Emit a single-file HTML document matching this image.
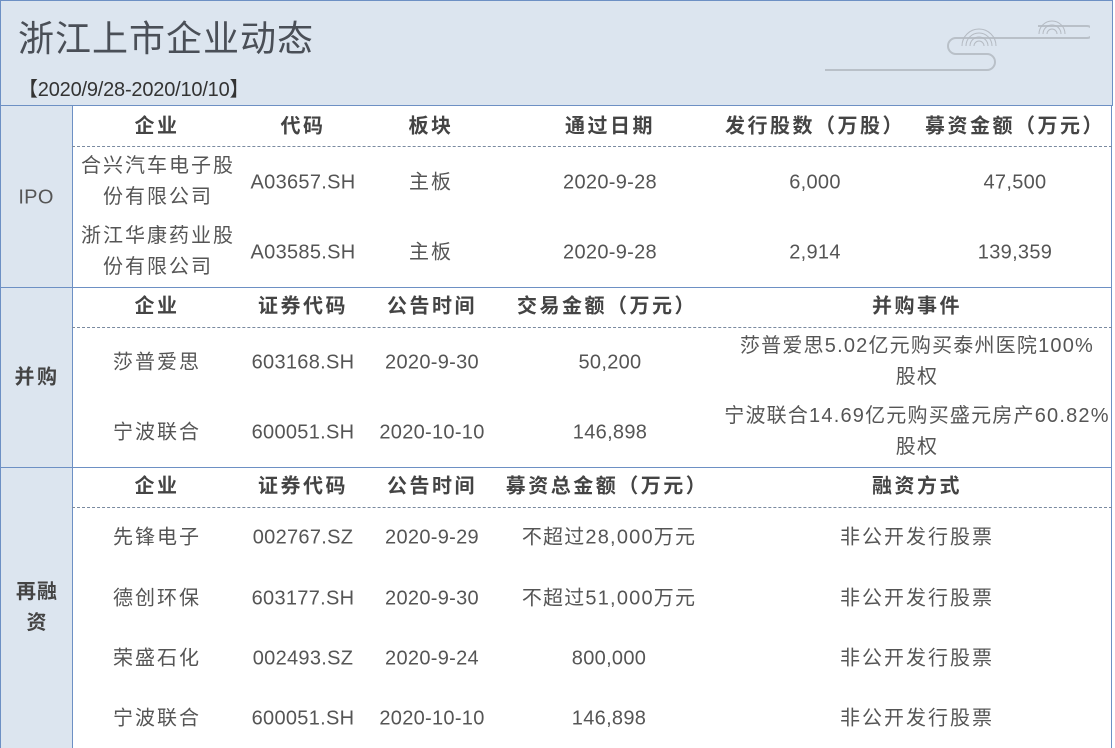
<!DOCTYPE html>
<html><head><meta charset="utf-8"><style>
body{margin:0;width:1115px;height:748px;background:#fff;position:relative;overflow:hidden;font-family:"Liberation Sans","Noto Sans CJK SC",sans-serif;color:#555}
.a{position:absolute}
.t{position:absolute;transform:translate(-50%,-50%);white-space:nowrap;font-size:20px;text-align:center;line-height:31px;letter-spacing:0.3px}
.cj{letter-spacing:2px}
.mx{letter-spacing:1.2px}
.h{font-weight:bold;color:#444;letter-spacing:2.5px}
.d{position:absolute;left:72px;width:1040px;border-top:1px dashed #7a8aa0;height:0}
</style></head><body>
<div class="a" style="left:0;top:0;width:1111px;height:105px;background:#dce5ef;border:1px solid #6d90c4;border-bottom:none"></div>
<div class="a" style="left:18px;top:10px;font-size:36px;color:#4a4f57;letter-spacing:1px">浙江上市企业动态</div>
<div class="a" style="left:18px;top:73px;font-size:20px;color:#333;letter-spacing:-0.2px">【2020/9/28-2020/10/10】</div>
<svg class="a" style="left:820px;top:15px" width="270" height="60" viewBox="0 0 270 60">
<g fill="none" stroke="#b9c0c8" stroke-width="2">
<path d="M5 55 H167 a8 8 0 0 0 0 -16 H136 a8 8 0 0 1 0 -16 H267 a6 6 0 0 0 0 -12 H218"/>
</g>
<g fill="none" stroke="#b4bac2" stroke-width="1">
<path d="M142 31 a17 17 0 0 1 34 0 M146 31 a13 13 0 0 1 26 0 M150 31 a9 9 0 0 1 18 0 M154 31 a5 5 0 0 1 10 0"/>
<path d="M219 19 a13 13 0 0 1 26 0 M223 19 a9 9 0 0 1 18 0 M227 19 a5 5 0 0 1 10 0"/>
</g></svg>
<div class="a" style="left:0;top:105px;width:71px;height:643px;background:#dce5ef;border-left:1px solid #6d90c4;border-right:1px solid #6d90c4"></div>
<div class="a" style="left:0;top:105px;width:1112px;border-top:1px solid #6d90c4"></div>
<div class="a" style="left:0;top:287px;width:1112px;border-top:1px solid #6d90c4"></div>
<div class="a" style="left:0;top:467px;width:1112px;border-top:1px solid #6d90c4"></div>
<div class="a" style="left:1111px;top:105px;height:643px;border-left:1px solid #6d90c4"></div>
<div class="d" style="top:146px"></div><div class="d" style="top:327px"></div><div class="d" style="top:507px"></div>
<div class="t" style="left:36px;top:198px">IPO</div>
<div class="t h" style="left:37px;top:378px">并购</div>
<div class="t h" style="left:37px;top:608px;letter-spacing:1px">再融<br>资</div>

<div class="t h" style="left:157px;top:127px">企业</div><div class="t h" style="left:303px;top:127px">代码</div><div class="t h" style="left:431px;top:127px">板块</div><div class="t h" style="left:610px;top:127px">通过日期</div><div class="t h" style="left:815px;top:127px">发行股数（万股）</div><div class="t h" style="left:1015px;top:127px">募资金额（万元）</div>
<div class="t cj" style="left:158px;top:182px">合兴汽车电子股<br>份有限公司</div><div class="t" style="left:303px;top:183px">A03657.SH</div><div class="t cj" style="left:431px;top:183px">主板</div><div class="t" style="left:610px;top:183px">2020-9-28</div><div class="t" style="left:815px;top:183px">6,000</div><div class="t" style="left:1015px;top:183px">47,500</div>
<div class="t cj" style="left:158px;top:252px">浙江华康药业股<br>份有限公司</div><div class="t" style="left:303px;top:253px">A03585.SH</div><div class="t cj" style="left:431px;top:253px">主板</div><div class="t" style="left:610px;top:253px">2020-9-28</div><div class="t" style="left:815px;top:253px">2,914</div><div class="t" style="left:1015px;top:253px">139,359</div>

<div class="t h" style="left:157px;top:307px">企业</div><div class="t h" style="left:303px;top:307px">证券代码</div><div class="t h" style="left:432px;top:307px">公告时间</div><div class="t h" style="left:607px;top:307px">交易金额（万元）</div><div class="t h" style="left:917px;top:307px">并购事件</div>
<div class="t cj" style="left:157px;top:363px">莎普爱思</div><div class="t" style="left:303px;top:363px">603168.SH</div><div class="t" style="left:432px;top:363px">2020-9-30</div><div class="t" style="left:610px;top:363px">50,200</div><div class="t mx" style="left:917px;top:362px">莎普爱思5.02亿元购买泰州医院100%<br>股权</div>
<div class="t cj" style="left:157px;top:433px">宁波联合</div><div class="t" style="left:303px;top:433px">600051.SH</div><div class="t" style="left:432px;top:433px">2020-10-10</div><div class="t" style="left:610px;top:433px">146,898</div><div class="t mx" style="left:917px;top:432px">宁波联合14.69亿元购买盛元房产60.82%<br>股权</div>

<div class="t h" style="left:157px;top:487px">企业</div><div class="t h" style="left:303px;top:487px">证券代码</div><div class="t h" style="left:432px;top:487px">公告时间</div><div class="t h" style="left:607px;top:487px">募资总金额（万元）</div><div class="t h" style="left:917px;top:487px">融资方式</div>
<div class="t cj" style="left:157px;top:538px">先锋电子</div><div class="t" style="left:303px;top:538px">002767.SZ</div><div class="t" style="left:432px;top:538px">2020-9-29</div><div class="t mx" style="left:609px;top:538px">不超过28,000万元</div><div class="t cj" style="left:917px;top:538px">非公开发行股票</div>
<div class="t cj" style="left:157px;top:599px">德创环保</div><div class="t" style="left:303px;top:599px">603177.SH</div><div class="t" style="left:432px;top:599px">2020-9-30</div><div class="t mx" style="left:609px;top:599px">不超过51,000万元</div><div class="t cj" style="left:917px;top:599px">非公开发行股票</div>
<div class="t cj" style="left:157px;top:659px">荣盛石化</div><div class="t" style="left:303px;top:659px">002493.SZ</div><div class="t" style="left:432px;top:659px">2020-9-24</div><div class="t" style="left:609px;top:659px">800,000</div><div class="t cj" style="left:917px;top:659px">非公开发行股票</div>
<div class="t cj" style="left:157px;top:719px">宁波联合</div><div class="t" style="left:303px;top:719px">600051.SH</div><div class="t" style="left:432px;top:719px">2020-10-10</div><div class="t" style="left:609px;top:719px">146,898</div><div class="t cj" style="left:917px;top:719px">非公开发行股票</div>
</body></html>
